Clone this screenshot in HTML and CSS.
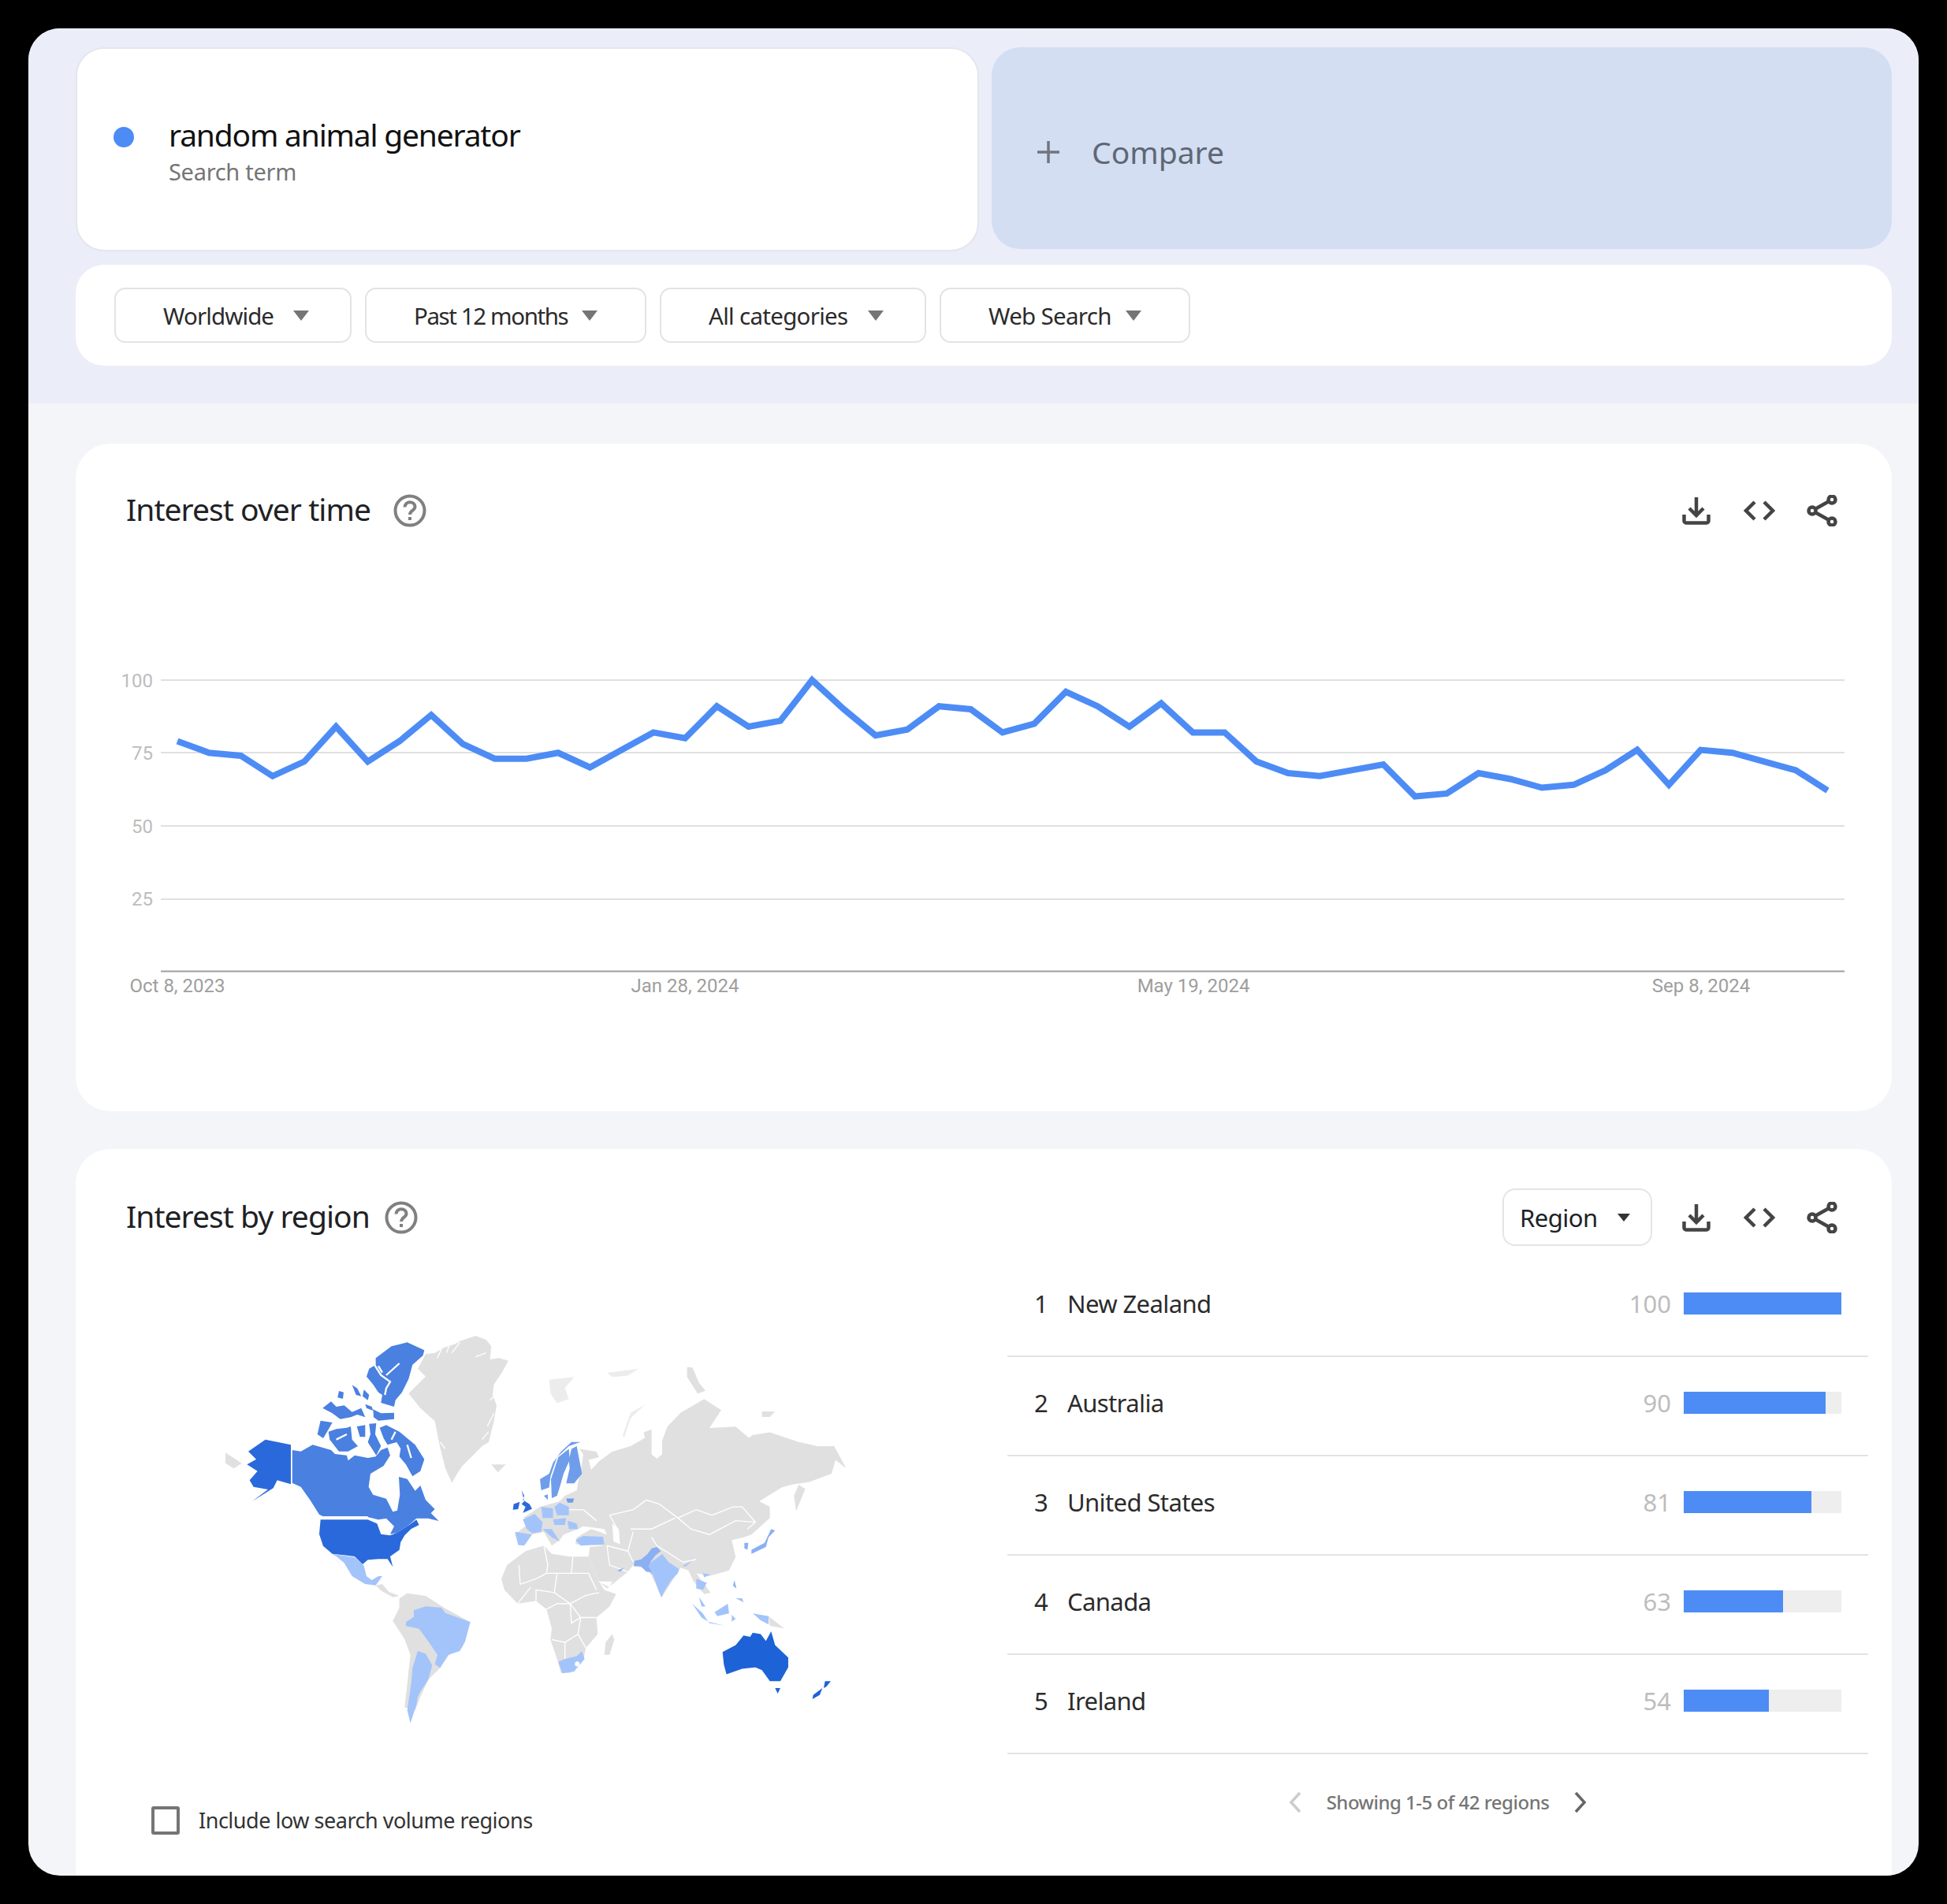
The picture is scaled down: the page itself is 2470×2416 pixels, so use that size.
FILE: index.html
```html
<!DOCTYPE html>
<html lang="en">
<head>
    <meta charset="UTF-8">
    <title>random animal generator - Explore - Google Trends</title>
    <link rel="stylesheet" href="styles.css">
</head>
<body>
<div class="panel">
    <div class="explore-header">
        <div class="term-row">
            <div class="term-card">
                <span class="term-dot"></span>
                <div>
                    <div class="term-name">random animal generator</div>
                    <div class="term-sub">Search term</div>
                </div>
            </div>
            <div class="compare-card">
                <svg class="compare-plus" viewBox="0 0 30 30"><path d="M15 1v28M1 15h28"/></svg>
                <span>Compare</span>
            </div>
        </div>
        <div class="filter-bar">
            <div class="filter">Worldwide<span class="caret"></span></div>
            <div class="filter filter-time">Past 12 months<span class="caret"></span></div>
            <div class="filter filter-cat">All categories<span class="caret"></span></div>
            <div class="filter filter-type">Web Search<span class="caret"></span></div>
        </div>
    </div>

    <div class="card card-time">
        <div class="card-head">
            <h2 class="card-title">Interest over time</h2>
            <svg class="help help-wide" viewBox="0 0 42 42"><circle cx="21" cy="21" r="18.5"/><path d="M14.5 16.5c0-3.800 3-6.300 6.500-6.300s6.500 2.400 6.500 5.900c0 4.600-6.500 4.700-6.500 10"/><path class="dot" d="M19 29h4v4h-4z"/></svg>
            <div class="card-actions">
                <svg class="tool" viewBox="0 0 40 40"><path d="M20 3v23M11 17l9 9 9-9M4.500 25v8a2.500 2.500 0 0 0 2.500 2.500h26a2.500 2.500 0 0 0 2.500-2.500v-8"/></svg>
                <svg class="tool" viewBox="0 0 40 40"><path d="M14 9L3 20l11 11M26 9l11 11-11 11"/></svg>
                <svg class="tool" viewBox="0 0 40 40"><circle cx="32" cy="6" r="4.500"/><circle cx="7" cy="20" r="4.500"/><circle cx="32" cy="34" r="4.500"/><path d="M11 17.700L28 8.300M11 22.300l17 9.400"/></svg>
            </div>
        </div>
        <svg class="trend-chart" viewBox="96 840 2304 430">
            <path class="grid" d="M204 863H2340M204 955H2340M204 1048H2340M204 1141H2340"/>
            <path class="axis" d="M204 1232.500H2340"/>
            <text class="y-label" x="194" y="872">100</text>
            <text class="y-label" x="194" y="964">75</text>
            <text class="y-label" x="194" y="1057">50</text>
            <text class="y-label" x="194" y="1149">25</text>
            <text class="x-label" x="225" y="1259">Oct 8, 2023</text>
            <text class="x-label" x="869" y="1259">Jan 28, 2024</text>
            <text class="x-label" x="1514" y="1259">May 19, 2024</text>
            <text class="x-label" x="2158" y="1259">Sep 8, 2024</text>
            <!-- x is the week, y the interest value -->
            <polyline class="trend-line" transform="translate(225 1232) scale(40.26 -3.69)" points="0,79 1,75 2,74 3,67 4,72 5,84 6,72 7,79 8,88 9,78 10,73 11,73 12,75 13,70 14,76 15,82 16,80 17,91 18,84 19,86 20,100 21,90 22,81 23,83 24,91 25,90 26,82 27,85 28,96 29,91 30,84 31,92 32,82 33,82 34,72 35,68 36,67 37,69 38,71 39,60 40,61 41,68 42,66 43,63 44,64 45,69 46,76 47,64 48,76 49,75 50,72 51,69 52,62"/>
        </svg>
    </div>

    <div class="card card-region">
        <div class="card-head card-head-region">
            <h2 class="card-title">Interest by region</h2>
            <svg class="help" viewBox="0 0 42 42"><circle cx="21" cy="21" r="18.5"/><path d="M14.5 16.5c0-3.800 3-6.300 6.500-6.300s6.500 2.400 6.500 5.900c0 4.600-6.500 4.700-6.500 10"/><path class="dot" d="M19 29h4v4h-4z"/></svg>
            <div class="card-actions">
                <div class="region-select">Region<span class="caret caret-dark"></span></div>
                <svg class="tool" viewBox="0 0 40 40"><path d="M20 3v23M11 17l9 9 9-9M4.500 25v8a2.500 2.500 0 0 0 2.500 2.500h26a2.500 2.500 0 0 0 2.500-2.500v-8"/></svg>
                <svg class="tool" viewBox="0 0 40 40"><path d="M14 9L3 20l11 11M26 9l11 11-11 11"/></svg>
                <svg class="tool" viewBox="0 0 40 40"><circle cx="32" cy="6" r="4.500"/><circle cx="7" cy="20" r="4.500"/><circle cx="32" cy="34" r="4.500"/><path d="M11 17.700L28 8.300M11 22.300l17 9.400"/></svg>
            </div>
        </div>
        <div class="region-body">
            <div class="region-left">
                <svg class="world-map" viewBox="270 1680 820 530">
                    <!-- americas and greenland -->
                    <g transform="translate(250 1670) scale(.3333)">
                        <path class="land" d="M870 145L905 140 940 120 985 105 1000 95 1060 75 1100 90 1120 115 1115 165 1150 160 1185 170 1160 215 1130 260 1125 300 1140 340 1130 400 1110 480 1085 495 1050 530 1010 570 990 600 970 635 945 580 925 500 905 400 850 350 805 295 830 270 870 230 840 200z"/>
                        <path class="fjord" d="M1060 155l40-15M1000 100l-30 40M930 125l-15 35M1130 370l-25 50M1110 440l-25 30M925 480l20 25M960 110l-10 30M1135 300l-20 20"/>
                        <path class="land" d="M1120 565l55 0-30 30zM108 520l62 40-30 20-32-20z"/>
                        <path class="c3" d="M362 510L395 515 440 490 510 510 525 525 570 530 575 550 600 530 650 540 680 535 700 510 725 500 735 530 710 570 660 600 653 650 670 680 720 695 745 745 762 740 772 680 768 612 800 620 830 665 850 645 870 700 905 735 890 750 920 780 880 770 835 770 800 800 760 825 735 830 750 800 720 770 690 775 650 765 480 763 465 755 430 700 395 650 362 635z"/>
                        <path class="c3" d="M865 130L860 150 820 185 805 240 780 290 755 320 750 345 700 330 705 300 690 290 670 260 645 230 655 200 680 185 680 160 740 115 800 100zM590 262L610 275 625 305 605 300zM635 280L655 300 650 320 630 305zM540 285L558 290 555 315 535 310zM478 350L510 325 530 345 560 340 590 365 625 350 640 385 610 375 585 385 545 392 515 370zM640 335L665 345 670 360 645 350zM670 355L700 370 750 368 750 392 690 398 672 385zM470 398L515 405 495 440 480 465 458 450zM500 440L530 430 570 425 585 420 590 470 612 495 575 515 540 515 520 490 505 470zM608 420L640 415 640 460 620 460zM655 410L682 408 678 450 700 495 682 530 650 480 660 450zM695 425L720 415 770 440 800 465 830 490 865 545 850 590 820 610 795 565 770 535 775 505 760 480 725 490 710 465z"/>
                        <path class="fjord fjord-wide" d="M675 185L700 225 735 250 720 275 715 300M770 180L720 225M690 190L705 215M530 470L570 450M755 440L740 470M800 490L815 540"/>
                        <path class="c2" d="M470 775L650 775 685 790 700 830 735 835 760 825 800 800 835 775 845 795 815 810 790 835 775 860 770 890 735 915 745 955 725 925 690 925 650 928 630 945 600 915 560 910 515 905 480 875 465 830z"/>
                        <path class="c2" d="M357 490L260 470 195 515 225 545 190 565 230 590 200 625 215 650 270 660 210 705 290 655 305 625 357 640z"/>
                        <path class="border" d="M359 490V640M480 764H650"/>
                        <path class="land" d="M680 1025L705 1020 730 1050 770 1065 745 1070 700 1045zM770 1075L800 1055 870 1065 940 1110 1040 1165 1010 1260 960 1290 920 1345 880 1385 850 1450 830 1500 790 1490 800 1400 812 1290 790 1230 745 1160 770 1110z"/>
                        <path class="c5" d="M515 905L560 912 600 918 635 950 645 990 665 1005 690 990 705 990 680 1025 640 1020 590 990 560 940 530 915zM520 910L560 975 535 935z"/>
                        <path class="c5" d="M825 1120L870 1105 930 1110 945 1130 1040 1165 1020 1240 1000 1275 955 1290 925 1340 905 1325 915 1290 885 1245 845 1190 795 1180 795 1165 825 1145zM840 1275L870 1285 895 1330 880 1385 850 1430 840 1450 835 1480 812 1550 800 1500 815 1400 820 1340z"/>
                    </g>
                    <!-- europe, asia, africa, oceania -->
                    <g transform="translate(600 1670) scale(.3333 .3509)">
                        <path class="land" d="M405 480L470 490 480 510 440 520 450 555 480 525 530 490 600 470 655 440 650 420 680 410 680 500 700 515 720 500 720 450 740 400 790 350 880 300 945 340 900 405 1000 400 1050 440 1065 430 1130 420 1240 455 1310 470 1375 470 1420 550 1380 520 1365 570 1280 600 1210 610 1175 620 1090 670 1130 690 1130 730 1060 790 1030 800 985 810 1000 870 975 920 900 940 850 930 905 1000 880 1005 840 960 820 920 790 910 720 1015 670 920 610 900 590 925 510 985 480 960 440 870 445 835 500 830 390 825 395 800 450 770 510 790 500 770 420 760 400 770 345 790 330 810 300 830 270 780 225 790 180 830 160 790 230 735 190 730 255 690 330 670 350 650 395 630 400 600 410 560 420 500z"/>
                        <path class="land" d="M130 900L200 850 270 830 300 860 370 870 440 870 480 960 500 990 545 1005 520 1050 470 1090 475 1150 430 1200 420 1245 370 1290 335 1290 320 1240 295 1170 300 1130 280 1060 240 1030 170 1040 120 990 108 950zM530 1150L538 1170 520 1225 500 1225 505 1180zM815 185L835 185 860 240 885 270 855 280 815 220zM1100 345L1150 345 1130 365 1100 365zM1240 610L1265 625 1230 705 1222 650zM1125 1085L1185 1130 1130 1120z"/>
                        <path class="land-soft" d="M570 430L600 350 655 320 600 370 575 440zM290 230L385 220 350 260 365 300 320 315 295 280zM510 205L630 190 590 215 530 220z"/>
                        <path class="border" d="M520 720L610 700 660 665 710 680 780 730 850 700 910 720 990 690 1025 690 1075 745 1045 770M780 730L830 770 900 790 960 760 1000 740 1070 745M520 720L550 770M600 770L680 770 770 730M680 800L700 830 800 890 850 880M610 780L590 850 610 890M510 830L590 850M270 830L285 900 280 930 320 930 370 930 440 930M380 870L375 930M175 900L180 970 240 950 280 930M320 930L310 1000 370 1040 430 1010 480 1000M280 1060L320 1040 370 1040 410 1090 400 1150 350 1180 350 1240M300 1170L350 1180M410 1090L470 1090M400 1150L430 1200M240 1030L240 990 310 1000M170 1040L220 980M370 1040L375 1110 410 1090M440 930L470 990M420 700L470 740M365 700L420 700M510 830L520 900 590 925"/>
                        <path class="gulf" d="M530 750L555 770 560 825 535 815zM475 960L520 980 530 960z"/>
                        <path class="c5" d="M190 735L235 715 265 745 260 780 225 785 205 770zM160 780L225 790 195 830 172 828zM260 690L305 695 305 730 265 730zM310 690L330 675 365 690 365 720 320 720zM360 740L395 750 400 770 365 770zM390 810L420 795 495 798 500 825 410 830zM265 770L300 770 330 815 300 800zM305 735L355 730 350 755 310 755zM670 895L700 875 720 860 745 890 785 915 780 930 755 955 725 1000 718 1018 705 990 685 935 668 925zM795 905L835 885 810 905zM350 1240L395 1230 415 1212 425 1240 385 1285 340 1292 325 1250zM850 950L890 965 875 990 850 985zM875 930L905 935 880 945zM835 1040L875 1075 895 1105 870 1090zM920 1070L970 1040 975 1075 930 1085zM1065 1075L1125 1085 1125 1115 1095 1100zM860 1015L885 1050 870 1050zM985 1080L1000 1095 985 1105zM895 1105L960 1120 900 1110zM1000 1020L1025 1020 1030 1035z"/>
                        <path class="c4b" d="M615 885L640 880 665 860 680 840 700 835 715 850 695 865 675 890 668 905 680 925 660 925 640 905 612 905zM1135 770L1150 775 1125 800 1115 835 1060 860 1060 845 1110 820zM1033 820L1048 820 1045 845 1033 840zM550 920L575 910 560 925zM995 955L1003 985 990 975z"/>
                        <path class="c4" d="M410 455L375 455 335 490 305 530 290 570 255 590 260 630 290 620 295 580 320 510 365 470zM365 480L368 520 345 570 330 620 320 650 300 658 297 590 325 510zM375 480L395 470 405 520 415 570 385 605 355 605 368 550 365 520zM270 650L285 645 285 665zM355 660L385 660 380 675 360 675z"/>
                        <path class="c2" d="M185 630L195 650 190 665 215 680 225 697 190 712 200 690 185 680 195 670zM155 680L178 672 172 698 152 700z"/>
                        <path class="c1" d="M950 1215L1000 1190 1030 1155 1055 1160 1065 1145 1095 1150 1115 1175 1135 1140 1150 1190 1200 1235 1200 1270 1170 1320 1130 1320 1100 1280 1075 1270 1025 1275 965 1295 955 1260zM1150 1345L1170 1345 1160 1365zM1340 1320L1362 1320 1345 1340 1335 1345zM1330 1345L1320 1370 1292 1385 1295 1370z"/>
                        <circle class="hole" cx="397" cy="1258" r="9"/>
                    </g>
                </svg>
                <label class="low-volume"><span class="checkbox"></span>Include low search volume regions</label>
            </div>
            <div class="region-right">
                <div class="region-row">
                    <span class="rank">1</span><span class="region-name">New Zealand</span><span class="score">100</span>
                    <div class="bar"><div class="bar-fill" style="width: 100%"></div></div>
                </div>
                <div class="region-row">
                    <span class="rank">2</span><span class="region-name">Australia</span><span class="score">90</span>
                    <div class="bar"><div class="bar-fill" style="width: 90%"></div></div>
                </div>
                <div class="region-row">
                    <span class="rank">3</span><span class="region-name">United States</span><span class="score">81</span>
                    <div class="bar"><div class="bar-fill" style="width: 81%"></div></div>
                </div>
                <div class="region-row">
                    <span class="rank">4</span><span class="region-name">Canada</span><span class="score">63</span>
                    <div class="bar"><div class="bar-fill" style="width: 63%"></div></div>
                </div>
                <div class="region-row">
                    <span class="rank">5</span><span class="region-name">Ireland</span><span class="score">54</span>
                    <div class="bar"><div class="bar-fill" style="width: 54%"></div></div>
                </div>
                <div class="pager">
                    <svg class="pager-arrow pager-off" viewBox="0 0 16 28"><path d="M14 2L3 14l11 12"/></svg>
                    <span>Showing 1-5 of 42 regions</span>
                    <svg class="pager-arrow" viewBox="0 0 16 28"><path d="M2 2l11 12L2 26"/></svg>
                </div>
            </div>
        </div>
    </div>
</div>
</body>
</html>
```

FILE: styles.css
```css
* {
    box-sizing: border-box;
}
body {
    margin: 0;
    height: 2416px;
    padding: 36px;
    background-color: #000;
    font-family: 'Noto Sans', 'Open Sans', sans-serif;
    color: #202124;
}
.panel {
    height: 2344px;
    border-radius: 40px;
    overflow: hidden;
    background-color: #f3f5f9;
}

/* header */
.explore-header {
    height: 476px;
    padding: 24px 34px 0 60px;
    background-color: #ebeef9;
}
.term-row {
    display: flex;
    gap: 16px;
}
.term-card {
    width: 1146px;
    height: 259px;
    display: flex;
    align-items: center;
    padding: 6px 0 0 46px;
    background-color: #fff;
    border: 2px solid #e3e6ed;
    border-radius: 36px;
}
.term-dot {
    width: 26px;
    height: 26px;
    margin-right: 44px;
    margin-top: -37px;
    border-radius: 50%;
    background-color: #4d8cf5;
}
.term-name {
    font-size: 39px;
    line-height: 50px;
    letter-spacing: -1.2px;
    color: #111;
}
.term-sub {
    font-size: 29px;
    line-height: 44px;
    letter-spacing: -.3px;
    color: #757575;
}
.compare-card {
    flex: 1;
    height: 256px;
    display: flex;
    align-items: center;
    padding: 9px 0 0 57px;
    gap: 40px;
    font-size: 39px;
    color: #5f6775;
    background-color: #d3def2;
    border-radius: 36px;
}
.compare-plus {
    width: 30px;
    height: 30px;
    fill: none;
    stroke: #70767f;
    stroke-width: 3.5;
}
.filter-bar {
    display: flex;
    gap: 17px;
    height: 128px;
    margin-top: 17px;
    padding: 29px 0 0 49px;
    background-color: #fff;
    border-radius: 36px;
}
.filter {
    width: 301px;
    height: 70px;
    display: flex;
    align-items: center;
    padding: 0 52px 0 60px;
    font-size: 29.5px;
    letter-spacing: -.9px;
    color: #2b2b2b;
    background-color: #fff;
    border: 2px solid #e3e3e3;
    border-radius: 14px;
}
.filter-time { width: 357px; padding-right: 60px; letter-spacing: -1.4px; }
.filter-cat { width: 338px; letter-spacing: -.7px; }
.filter-type { width: 318px; padding-right: 60px; letter-spacing: -.7px; }
.caret {
    width: 0;
    height: 0;
    margin-left: auto;
    border-left: 10px solid transparent;
    border-right: 10px solid transparent;
    border-top: 13px solid #757575;
}

/* cards */
.card {
    margin: 0 34px 48px 60px;
    background-color: #fff;
    border-radius: 44px;
}
.card-time {
    height: 847px;
    margin-top: 51px;
    padding-top: 60px;
}
.card-region {
    height: 980px;
    margin-bottom: 0;
    padding-top: 50px;
}
.card-head {
    height: 50px;
    display: flex;
    align-items: center;
    padding: 0 68px 0 64px;
}
.card-head-region {
    height: 73px;
}
.card-title {
    margin: 0;
    padding-bottom: 5px;
    font-size: 39px;
    font-weight: 400;
    letter-spacing: -.95px;
    color: #202124;
}
.help {
    width: 42px;
    height: 42px;
    margin-left: 19px;
    fill: none;
    stroke: #808080;
    stroke-width: 4;
}
.help-wide {
    margin-left: 29px;
}
.help .dot {
    fill: #808080;
    stroke: none;
}
.card-actions {
    margin-left: auto;
    display: flex;
    align-items: center;
    gap: 40px;
}
.tool {
    width: 40px;
    height: 40px;
    fill: none;
    stroke: #444;
    stroke-width: 4.500;
}
.region-select {
    width: 190px;
    height: 73px;
    display: flex;
    align-items: center;
    padding: 0 26px 0 20px;
    margin-right: -4px;
    font-size: 31px;
    letter-spacing: -.5px;
    border: 2px solid #e5e5e5;
    border-radius: 16px;
}
.caret-dark {
    border-left-width: 8px;
    border-right-width: 8px;
    border-top: 10px solid #333;
}

/* line chart */
.trend-chart {
    display: block;
    width: 2304px;
    height: 430px;
    margin-top: 167px;
    font-family: Roboto, sans-serif;
}
.grid {
    stroke: #e0e0e0;
    stroke-width: 2;
}
.axis {
    stroke: #9e9e9e;
    stroke-width: 2;
}
.y-label {
    font-size: 24px;
    fill: #bdbdbd;
    text-anchor: end;
}
.x-label {
    font-size: 24px;
    fill: #9e9e9e;
    text-anchor: middle;
}
.trend-line {
    fill: none;
    stroke: #4d8cf5;
    stroke-width: 8;
    vector-effect: non-scaling-stroke;
}

/* region block */
.region-body {
    display: flex;
    margin-top: 13px;
}
.region-left {
    width: 1182px;
}
.world-map {
    display: block;
    width: 820px;
    height: 530px;
    margin: 86px 0 0 174px;
}
.land { fill: #e0e0e0; }
.land-soft { fill: #ececec; }
.c1 { fill: #1d63d7; }
.c2 { fill: #2a69db; }
.c3 { fill: #4a80e0; }
.c4 { fill: #6f9dea; }
.c4b { fill: #8ab0f3; }
.c5 { fill: #a3c4fa; }
.hole { fill: #fff; }
.gulf { fill: #fff; }
.border, .fjord {
    fill: none;
    stroke: #fff;
    stroke-width: 4;
}
.fjord-wide {
    stroke-width: 7;
}
.low-volume {
    display: flex;
    align-items: center;
    margin: 81px 0 0 96px;
    font-size: 27px;
    letter-spacing: -.48px;
    color: #333;
}
.checkbox {
    width: 36px;
    height: 36px;
    margin-right: 24px;
    border: 4px solid #757575;
    border-radius: 3px;
}
.region-right {
    width: 1092px;
    margin-top: 2px;
}
.region-row {
    height: 126px;
    display: flex;
    align-items: center;
    padding: 0 34px 8px;
    border-bottom: 2px solid #e3e3e3;
    font-size: 31px;
    color: #2b2b2b;
}
.rank {
    width: 42px;
}
.region-name {
    flex: 1;
    letter-spacing: -.6px;
}
.score {
    margin-right: 16px;
    color: #bdbdbd;
}
.bar {
    width: 200px;
    height: 28px;
    background-color: #eee;
}
.bar-fill {
    height: 100%;
    background-color: #4d8cf5;
}
.pager {
    display: flex;
    justify-content: center;
    align-items: center;
    gap: 32px;
    margin-top: 44px;
    font-size: 24px;
    font-weight: 500;
    letter-spacing: -.5px;
    color: #757575;
}
.pager-arrow {
    width: 16px;
    height: 28px;
    fill: none;
    stroke: #666;
    stroke-width: 3.5;
}
.pager-off {
    stroke: #ccc;
}
```
